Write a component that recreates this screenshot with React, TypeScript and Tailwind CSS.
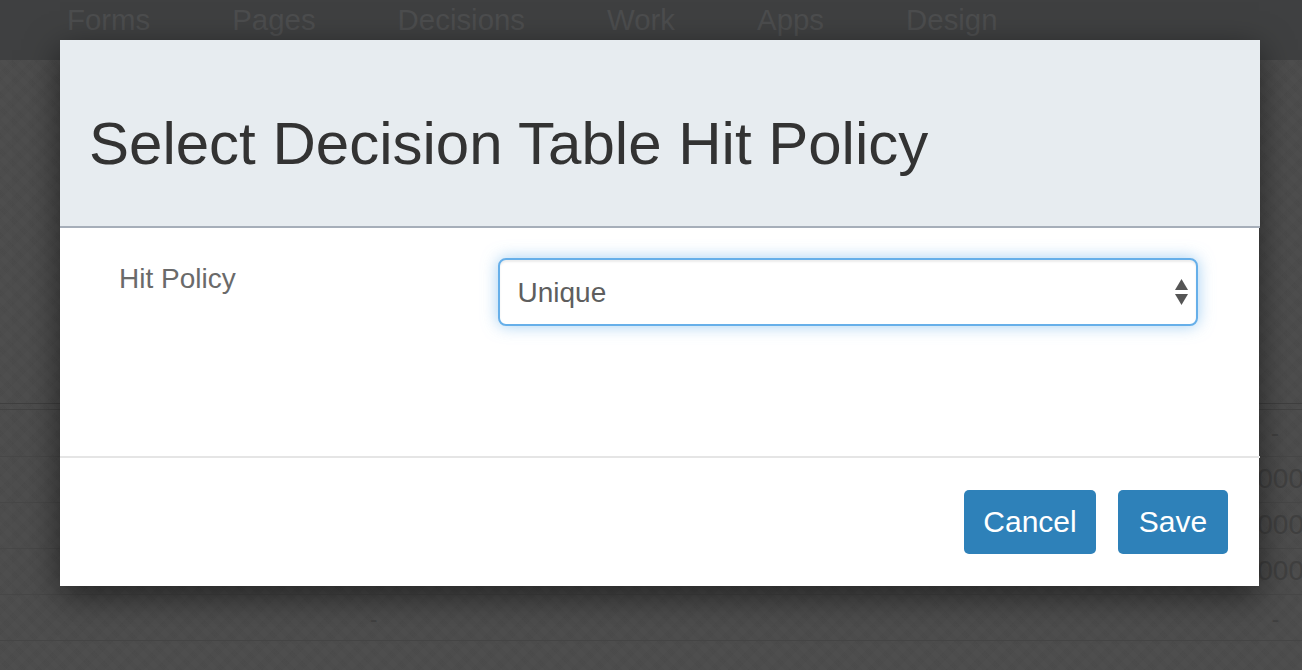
export default function App() {
  const nav = ["Forms", "Pages", "Decisions", "Work", "Apps", "Design"];
  const texture =
    "bg-[repeating-linear-gradient(45deg,rgba(255,255,255,0.008)_0px,rgba(255,255,255,0.008)_5px,rgba(0,0,0,0.008)_5px,rgba(0,0,0,0.008)_10px),repeating-linear-gradient(-45deg,rgba(255,255,255,0.008)_0px,rgba(255,255,255,0.008)_7px,rgba(0,0,0,0.008)_7px,rgba(0,0,0,0.008)_14px)]";
  const row = "flex h-[46px] items-center justify-end overflow-hidden border-b border-[#474747] pb-[2px] text-[28px] text-[#404040]";
  return (
    <div className="relative h-[670px] w-[1302px] overflow-hidden bg-[#4c4c4c] font-['Liberation_Sans',Arial,sans-serif]">
      <div className={`h-full ${texture}`}>
        <header className="flex h-[60px] items-center gap-[82px] bg-[#3f4041] pb-[20px] pl-[67px] text-[29.4px] leading-[40px] text-[#4c4d4e]">
          {nav.map((n) => (
            <span key={n}>{n}</span>
          ))}
        </header>
        <div className="h-[344px] border-b border-[#3f3f3f]" />
        <div className="mt-[5px] h-[1px] bg-[#424242]" />
        <div className="flex h-[47px] items-center justify-end border-b border-[#474747] pr-[23px] text-[24px] text-[#404040]">-</div>
        <div className={row}>
          <span className="-mr-[2px]">000</span>
        </div>
        <div className={row}>
          <span className="-mr-[2px]">000</span>
        </div>
        <div className={row}>
          <span className="-mr-[2px]">000</span>
        </div>
        <div className="flex h-[46px] items-center justify-between border-b border-[#454545] pt-[4px] pl-[370px] pr-[23px] text-[22px] text-[#404040]">
          <span>-</span>
          <span>-</span>
        </div>
      </div>

      <div
        role="dialog"
        className="absolute left-[60px] top-[40px] flex h-[546px] w-[1199px] flex-col bg-white shadow-[0_10px_32px_rgba(0,0,0,0.55)]"
      >
        <div className="-mr-px flex h-[188px] shrink-0 items-end border-b-2 border-[#a6aeb9] bg-[#e7ecf0] pb-[49px] pl-[30px]">
          <h1 className="-ml-px text-[60px] font-normal leading-[66px] text-[#333333]">Select Decision Table Hit Policy</h1>
        </div>
        <div className="-mr-px flex h-[230px] shrink-0 items-start border-b-2 border-[#e5e5e5] pt-[30px]">
          <label className="mt-px w-[438px] shrink-0 pl-[59px] text-[28px] leading-[40px] text-[#6a6a6a]">Hit Policy</label>
          <div className="relative h-[68px] w-[700px]">
            <select className="h-full w-full appearance-none rounded-lg border-2 border-[#66afe9] bg-white pl-[17.5px] pt-[2px] text-[28px] text-[#5e5e5e] shadow-[inset_0_2px_2px_rgba(0,0,0,0.075),0_0_16px_rgba(102,175,233,0.6)] outline-none">
              <option>Unique</option>
            </select>
            <svg className="pointer-events-none absolute right-[10px] top-[21px]" width="13" height="26" viewBox="0 0 13 26" fill="#555555">
              <path d="M6.5 0L13 11H0z" />
              <path d="M0 15h13L6.5 26z" />
            </svg>
          </div>
        </div>
        <div className="flex flex-1 items-start justify-end gap-[22px] pr-[31px] pt-[32px]">
          <button className="h-[64px] w-[132px] rounded-[5px] bg-[#2e81b9] pb-[2px] text-[30px] text-white">Cancel</button>
          <button className="h-[64px] w-[110px] rounded-[5px] bg-[#2e81b9] pb-[2px] text-[30px] text-white">Save</button>
        </div>
      </div>
    </div>
  );
}
